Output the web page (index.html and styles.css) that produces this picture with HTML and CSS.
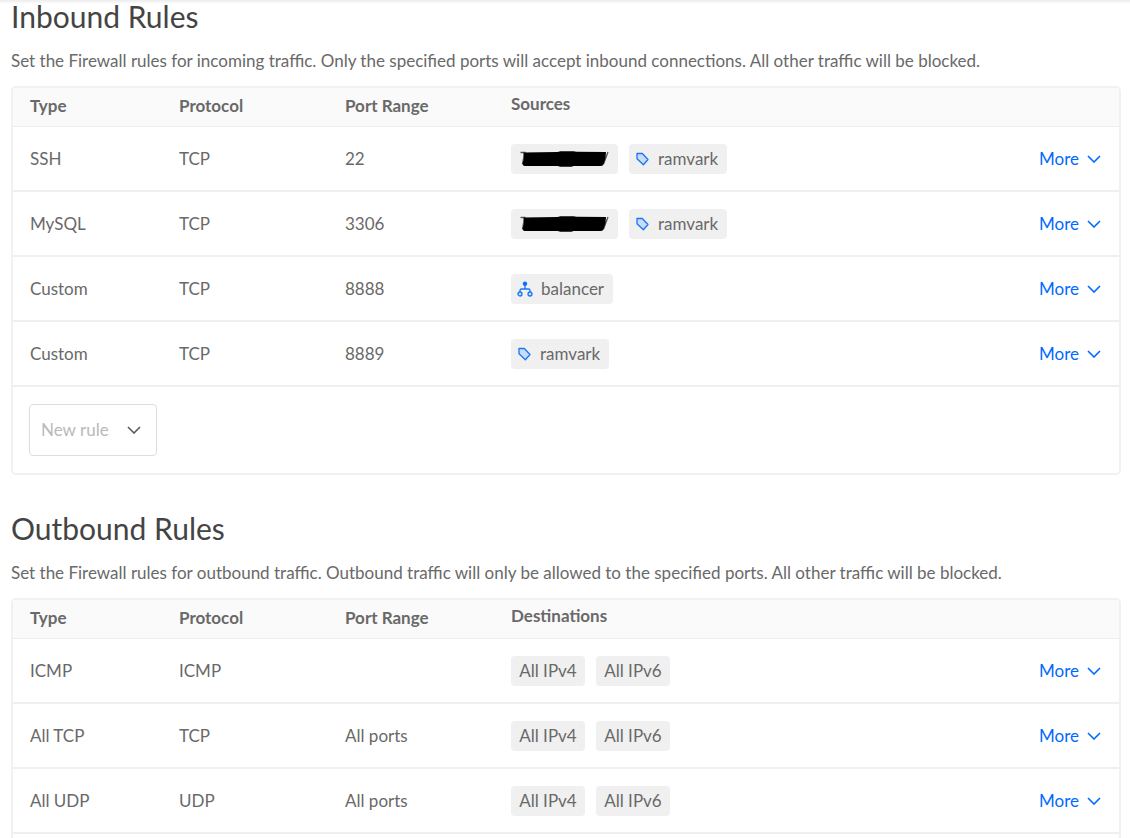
FILE: index.html
```html
<!DOCTYPE html>
<html lang="en">
<head>
<meta charset="utf-8">
<title>Firewall Rules</title>
<link rel="stylesheet" href="styles.css">
</head>
<body>
<svg class="sprite" aria-hidden="true">
  <symbol id="chevron" viewBox="0 0 14 8"><path d="M1 1l6 6 6-6" fill="none" stroke="currentColor" stroke-width="1.6"/></symbol>
  <symbol id="tag" viewBox="0 0 14 14"><path d="M1.500 1.500h5.300l5.700 6-4.600 5.200-6.400-5.900z" fill="#c8dcf8" stroke="#1a75f5" stroke-width="1.300" stroke-linejoin="round"/></symbol>
  <symbol id="balancer" viewBox="0 0 16 16"><g stroke="#1a75f5" stroke-width="1.300"><path d="M8 3v5M3 11V9.500q0-1.500 1.500-1.500h7q1.500 0 1.500 1.500V11" fill="none"/><circle cx="8" cy="2.700" r="1.600" fill="#0069ff"/><circle cx="3" cy="13" r="2" fill="#c8dcf8"/><circle cx="13" cy="13" r="2" fill="#c8dcf8"/></g></symbol>
  <symbol id="redacted" viewBox="0 0 90 18"><path d="M1 2.500h5M5 3L3 14M88.500 2l-4.500 12" stroke="#555" stroke-width="1.300" fill="none"/><path d="M4 2.500l34-.5 3-.8h13l3 .6 29.500.2L86 8l-2 6.500q-1 1.500-3 1.500H54l-2 .7H41l-3-.7H5q-2-.5-2-2L4.500 8z" fill="#000"/></symbol>
</svg>
<main class="page">
  <section class="rules">
    <h2 class="title">Inbound Rules</h2>
    <p class="intro">Set the Firewall rules for incoming traffic. Only the specified ports will accept inbound connections. All other traffic will be blocked.</p>
    <div class="card">
      <table class="table">
        <thead><tr><th class="col-type">Type</th><th class="col-mid">Protocol</th><th class="col-mid">Port Range</th><th class="col-hosts">Sources</th><th aria-label="Actions"></th></tr></thead>
        <tbody>
          <tr><td>SSH</td><td>TCP</td><td>22</td><td><div class="chips"><span class="chip"><svg class="redacted" role="img" aria-label="Hidden address"><use href="#redacted"/></svg></span><span class="chip chip-icon"><svg class="tag"><use href="#tag"/></svg>ramvark</span></div></td><td class="actions"><button class="more" type="button">More<svg class="chevron"><use href="#chevron"/></svg></button></td></tr>
          <tr><td>MySQL</td><td>TCP</td><td>3306</td><td><div class="chips"><span class="chip"><svg class="redacted" role="img" aria-label="Hidden address"><use href="#redacted"/></svg></span><span class="chip chip-icon"><svg class="tag"><use href="#tag"/></svg>ramvark</span></div></td><td class="actions"><button class="more" type="button">More<svg class="chevron"><use href="#chevron"/></svg></button></td></tr>
          <tr><td>Custom</td><td>TCP</td><td>8888</td><td><div class="chips"><span class="chip chip-icon"><svg class="balancer"><use href="#balancer"/></svg>balancer</span></div></td><td class="actions"><button class="more" type="button">More<svg class="chevron"><use href="#chevron"/></svg></button></td></tr>
          <tr><td>Custom</td><td>TCP</td><td>8889</td><td><div class="chips"><span class="chip chip-icon"><svg class="tag"><use href="#tag"/></svg>ramvark</span></div></td><td class="actions"><button class="more" type="button">More<svg class="chevron"><use href="#chevron"/></svg></button></td></tr>
        </tbody>
      </table>
      <div class="add">
        <div class="picker">
          <select class="select" aria-label="New rule"><option>New rule</option></select>
          <svg class="chevron picker-chevron"><use href="#chevron"/></svg>
        </div>
      </div>
    </div>
  </section>
  <section class="rules rules-last">
    <h2 class="title">Outbound Rules</h2>
    <p class="intro">Set the Firewall rules for outbound traffic. Outbound traffic will only be allowed to the specified ports. All other traffic will be blocked.</p>
    <div class="card card-open">
      <table class="table">
        <thead><tr><th class="col-type">Type</th><th class="col-mid">Protocol</th><th class="col-mid">Port Range</th><th class="col-hosts">Destinations</th><th aria-label="Actions"></th></tr></thead>
        <tbody>
          <tr><td>ICMP</td><td>ICMP</td><td></td><td><div class="chips"><span class="chip">All IPv4</span><span class="chip">All IPv6</span></div></td><td class="actions"><button class="more" type="button">More<svg class="chevron"><use href="#chevron"/></svg></button></td></tr>
          <tr><td>All TCP</td><td>TCP</td><td>All ports</td><td><div class="chips"><span class="chip">All IPv4</span><span class="chip">All IPv6</span></div></td><td class="actions"><button class="more" type="button">More<svg class="chevron"><use href="#chevron"/></svg></button></td></tr>
          <tr><td>All UDP</td><td>UDP</td><td>All ports</td><td><div class="chips"><span class="chip">All IPv4</span><span class="chip">All IPv6</span></div></td><td class="actions"><button class="more" type="button">More<svg class="chevron"><use href="#chevron"/></svg></button></td></tr>
        </tbody>
      </table>
    </div>
  </section>
</main>
</body>
</html>
```
FILE: styles.css
```css
* { box-sizing: border-box; }
body {
  margin: 0;
  background: #fff;
  color: #696969;
  font: 17px/24px Lato, "Open Sans", sans-serif;
}
.sprite { display: none; }
.page {
  display: flex;
  flex-direction: column;
  gap: 37px;
  min-height: 100vh;
  padding: 0 9px 0 11px;
  box-shadow: inset 0 5px 3px -3px #ececec;
}
.rules-last { display: flex; flex-direction: column; flex-grow: 1; }
.title {
  margin: 0;
  color: #444;
  font-size: 30px;
  font-weight: 400;
  line-height: 32px;
}
.intro { margin: 17px 0 13px; }
.card { border: 2px solid #f1f1f1; border-radius: 5px; }
.card-open { flex-grow: 1; border-bottom: 0; border-radius: 5px 5px 0 0; }
.table { width: 100%; border-spacing: 0; table-layout: fixed; }
.col-type { width: 149px; }
.col-mid { width: 166px; }
.table th {
  height: 39px;
  padding: 0 0 2px 17px;
  border-bottom: 1px solid #eee;
  background: #fafafa;
  font-weight: 700;
  text-align: left;
}
.table .col-hosts { width: 400px; padding-bottom: 6px; }
.table td {
  height: 65px;
  padding: 0 0 0 17px;
  border-bottom: 2px solid #efefef;
}
.chips { display: flex; gap: 11px; }
.chip {
  display: flex;
  align-items: center;
  justify-content: center;
  min-width: 74px;
  height: 30px;
  padding: 0 8px;
  border-radius: 4px;
  background: #f0f0f0;
}
.chip-icon { gap: 8px; padding: 0 9px 0 6px; }
.tag { width: 15px; height: 14px; }
.balancer { width: 16px; height: 16px; }
.redacted { width: 91px; height: 18px; }
.table .actions { padding-right: 18px; text-align: right; }
.more {
  display: inline-flex;
  align-items: center;
  gap: 8px;
  padding: 0;
  border: 0;
  background: none;
  color: #0069ff;
  font: inherit;
}
.chevron { width: 14px; height: 8px; }
.add { padding: 17px 16px; }
.picker { display: inline-grid; align-items: center; vertical-align: top; }
.select {
  grid-area: 1 / 1;
  appearance: none;
  width: 128px;
  height: 52px;
  padding: 0 40px 0 11px;
  border: 1px solid #ddd;
  border-radius: 4px;
  background: #fff;
  color: #b9b9b9;
  font: inherit;
}
.picker-chevron {
  grid-area: 1 / 1;
  justify-self: end;
  margin-right: 16px;
  color: #5b5b5b;
  pointer-events: none;
}
```
